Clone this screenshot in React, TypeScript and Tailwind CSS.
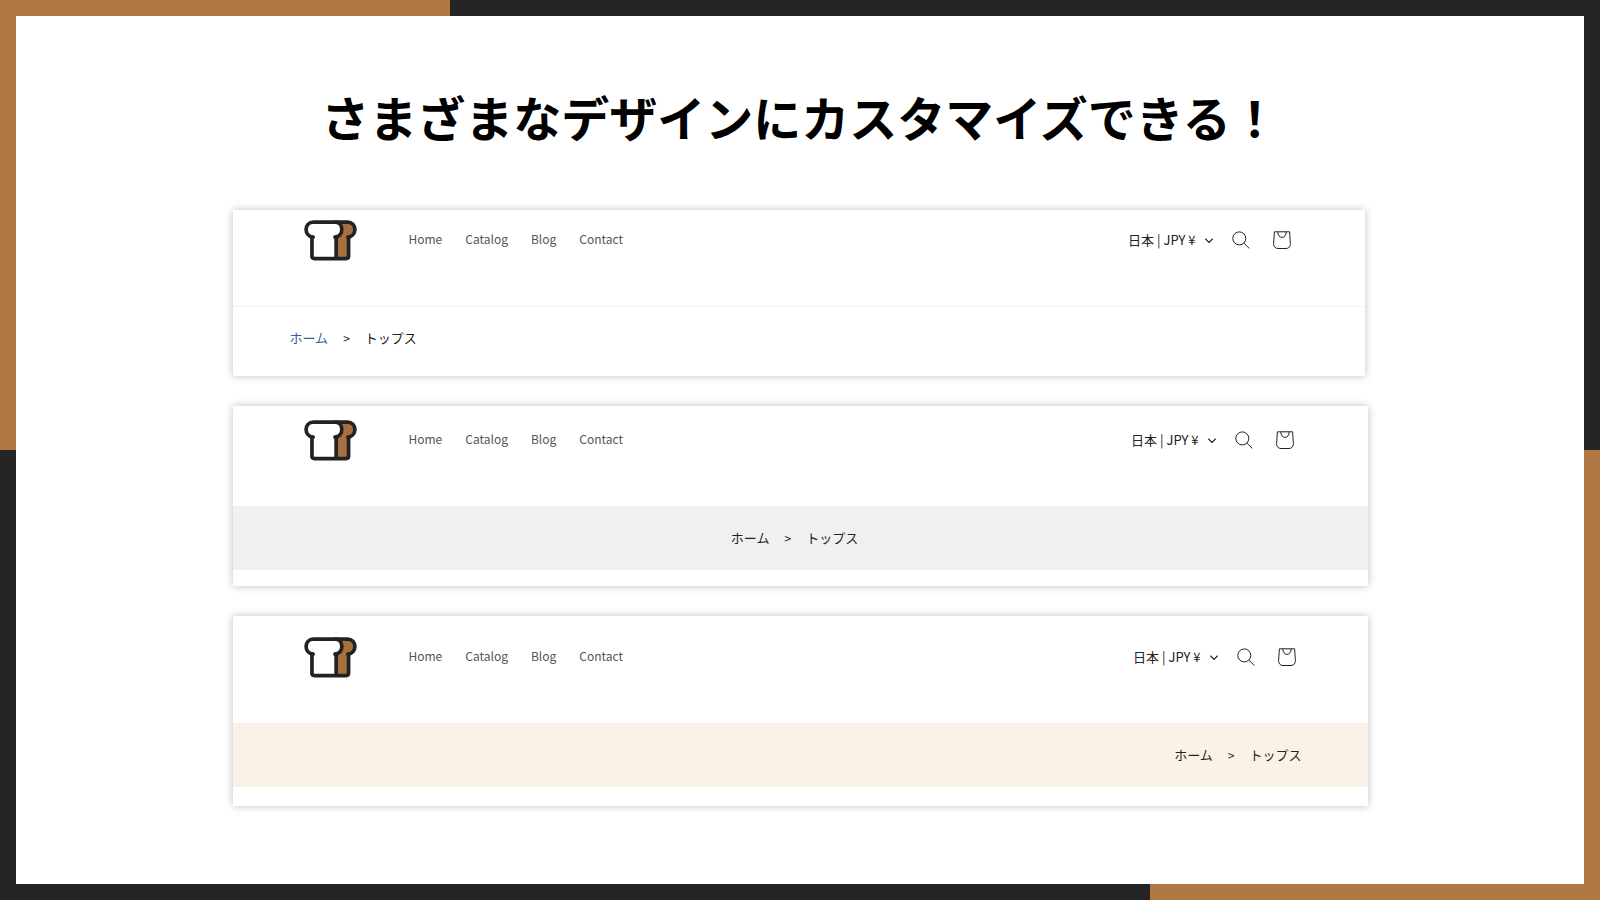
type Align = "left" | "center" | "right";

interface Storefront {
  align: Align;
  card: string;
  header: string;
  band: string;
  homeLink: string;
}

const STOREFRONTS: Storefront[] = [
  {
    align: "left",
    card: "mr-[3px] pb-[6px]",
    header: "pt-[10px] pr-[74px]",
    band: "border-t border-[#f1f1f1] bg-white pb-[2px]",
    homeLink: "text-[#3a5a9b]",
  },
  {
    align: "center",
    card: "pb-4",
    header: "pt-[14px] pr-[74px]",
    band: "bg-[#f0f0f0]",
    homeLink: "text-[#222222]",
  },
  {
    align: "right",
    card: "pb-[19px]",
    header: "pt-[21px] pr-[72px]",
    band: "bg-[#fbf2e7]",
    homeLink: "text-[#222222]",
  },
];

const ALIGNMENT: Record<Align, string> = {
  left: "justify-start",
  center: "justify-center pr-[68px]",
  right: "justify-end pr-[66px]",
};

const NAV_ITEMS = ["Home", "Catalog", "Blog", "Contact"];

function BreadLogo() {
  return (
    <svg width="53" height="41" viewBox="0 0 54 42" fill="none" aria-hidden="true">
      <path
        d="M33 2.2H44.5C49 2.2 52 5.5 52 9.8C52 14 49.5 17 45.5 17.8V37C45.5 38.7 44.6 39.6 43 39.6H33Z"
        fill="#a8703c"
      />
      <path
        d="M9.5 2.2H31.5C36 2.2 38.5 5.5 38.5 9.8C38.5 14 36 17 32.2 17.8V39.6H10.5C8.8 39.6 8 38.7 8 37V17.8C4.5 17 2 14 2 9.8C2 5.5 5 2.2 9.5 2.2Z"
        fill="#ffffff"
      />
      <g stroke="#222222" strokeWidth="3.8" strokeLinecap="round" strokeLinejoin="round">
        <path d="M9.2 17.6C5 17.2 2 14 2 9.8C2 5.5 5 2.2 9.5 2.2H44.5C49 2.2 52 5.5 52 9.8C52 14 49 17.2 44.8 17.6" />
        <path d="M8 17.8V37C8 38.7 8.8 39.6 10.5 39.6H43C44.6 39.6 45.5 38.7 45.5 37V17.8" />
        <path d="M32.5 2.2C36.5 2.6 38.6 5.8 38.6 9.8C38.6 14 36 17.2 31.6 17.6" />
        <path d="M32.8 17.8V39" />
      </g>
    </svg>
  );
}

function ChevronIcon() {
  return (
    <svg width="8" height="7" viewBox="0 0 8 7" fill="none" stroke="currentColor" aria-hidden="true">
      <path d="M0.6 2L4 5.4L7.4 2" strokeWidth="1.1" strokeLinecap="round" />
    </svg>
  );
}

function SearchIcon() {
  return (
    <svg width="18" height="18" viewBox="0 0 18 18" fill="none" stroke="currentColor" aria-hidden="true">
      <circle cx="7.3" cy="7.4" r="6.5" strokeWidth="1" />
      <path d="M12 12.2L17.4 17.5" strokeWidth="1" />
    </svg>
  );
}

function BagIcon() {
  return (
    <svg width="18" height="18" viewBox="0 0 18 18" fill="none" stroke="currentColor" aria-hidden="true">
      <path
        d="M1.4 0.8H16.6L17.4 12.6C17.5 15.6 15.6 17.5 13 17.5H5C2.4 17.5 0.5 15.6 0.6 12.6Z"
        strokeWidth="1"
      />
      <path d="M4.8 0.8C4.8 4.2 6.6 6.4 9 6.4C11.4 6.4 13.2 4.2 13.2 0.8" strokeWidth="1" />
    </svg>
  );
}

function StoreHeader({ spacing }: { spacing: string }) {
  return (
    <header className={`flex items-start pb-[45px] pl-[71px] ${spacing}`}>
      <a href="#home" aria-label="Home" className="shrink-0">
        <BreadLogo />
      </a>
      <nav className="ml-[52px] flex h-[38px] items-center gap-[23px] text-[12px] leading-5 text-[#555555]">
        {NAV_ITEMS.map((item) => (
          <a key={item} href={`#${item.toLowerCase()}`}>
            {item}
          </a>
        ))}
      </nav>
      <div className="ml-auto flex h-10 items-center text-[#222222]">
        <button type="button" className="flex items-center gap-[9px] text-[13px] leading-5">
          日本 | JPY ¥
          <ChevronIcon />
        </button>
        <button type="button" aria-label="Search" className="ml-[19px]">
          <SearchIcon />
        </button>
        <a href="#cart" aria-label="Cart" className="ml-[23px]">
          <BagIcon />
        </a>
      </div>
    </header>
  );
}

function StoreCard({ align, card, header, band, homeLink }: Storefront) {
  return (
    <section className={`bg-white shadow-[0_0_8px_rgba(0,0,0,0.25)] ${card}`}>
      <StoreHeader spacing={header} />
      <nav
        aria-label="Breadcrumb"
        className={`flex h-16 items-center pl-[57px] text-[13px] leading-5 text-[#222222] ${band} ${ALIGNMENT[align]}`}
      >
        <ol className="flex items-center gap-[15px]">
          <li>
            <a href="#home" className={homeLink}>
              ホーム
            </a>
          </li>
          <li aria-hidden="true" className="text-[12px]">
            &gt;
          </li>
          <li>トップス</li>
        </ol>
      </nav>
    </section>
  );
}

export default function App() {
  return (
    <div className="min-h-screen bg-[#242424] bg-[image:linear-gradient(#b07843,#b07843),linear-gradient(#b07843,#b07843)] bg-[size:450px_450px] bg-[position:left_top,right_bottom] bg-no-repeat p-4 font-['Noto_Sans_CJK_JP',sans-serif]">
      <main className="flex min-h-[calc(100vh-32px)] flex-col items-center bg-white px-4 pt-16 pb-12">
        <h1 className="text-5xl leading-[72px] font-bold text-black">
          さまざまなデザインにカスタマイズできる！
        </h1>
        <div className="mt-[58px] flex w-full max-w-[1135px] flex-col gap-[30px]">
          {STOREFRONTS.map((store) => (
            <StoreCard key={store.align} {...store} />
          ))}
        </div>
      </main>
    </div>
  );
}
